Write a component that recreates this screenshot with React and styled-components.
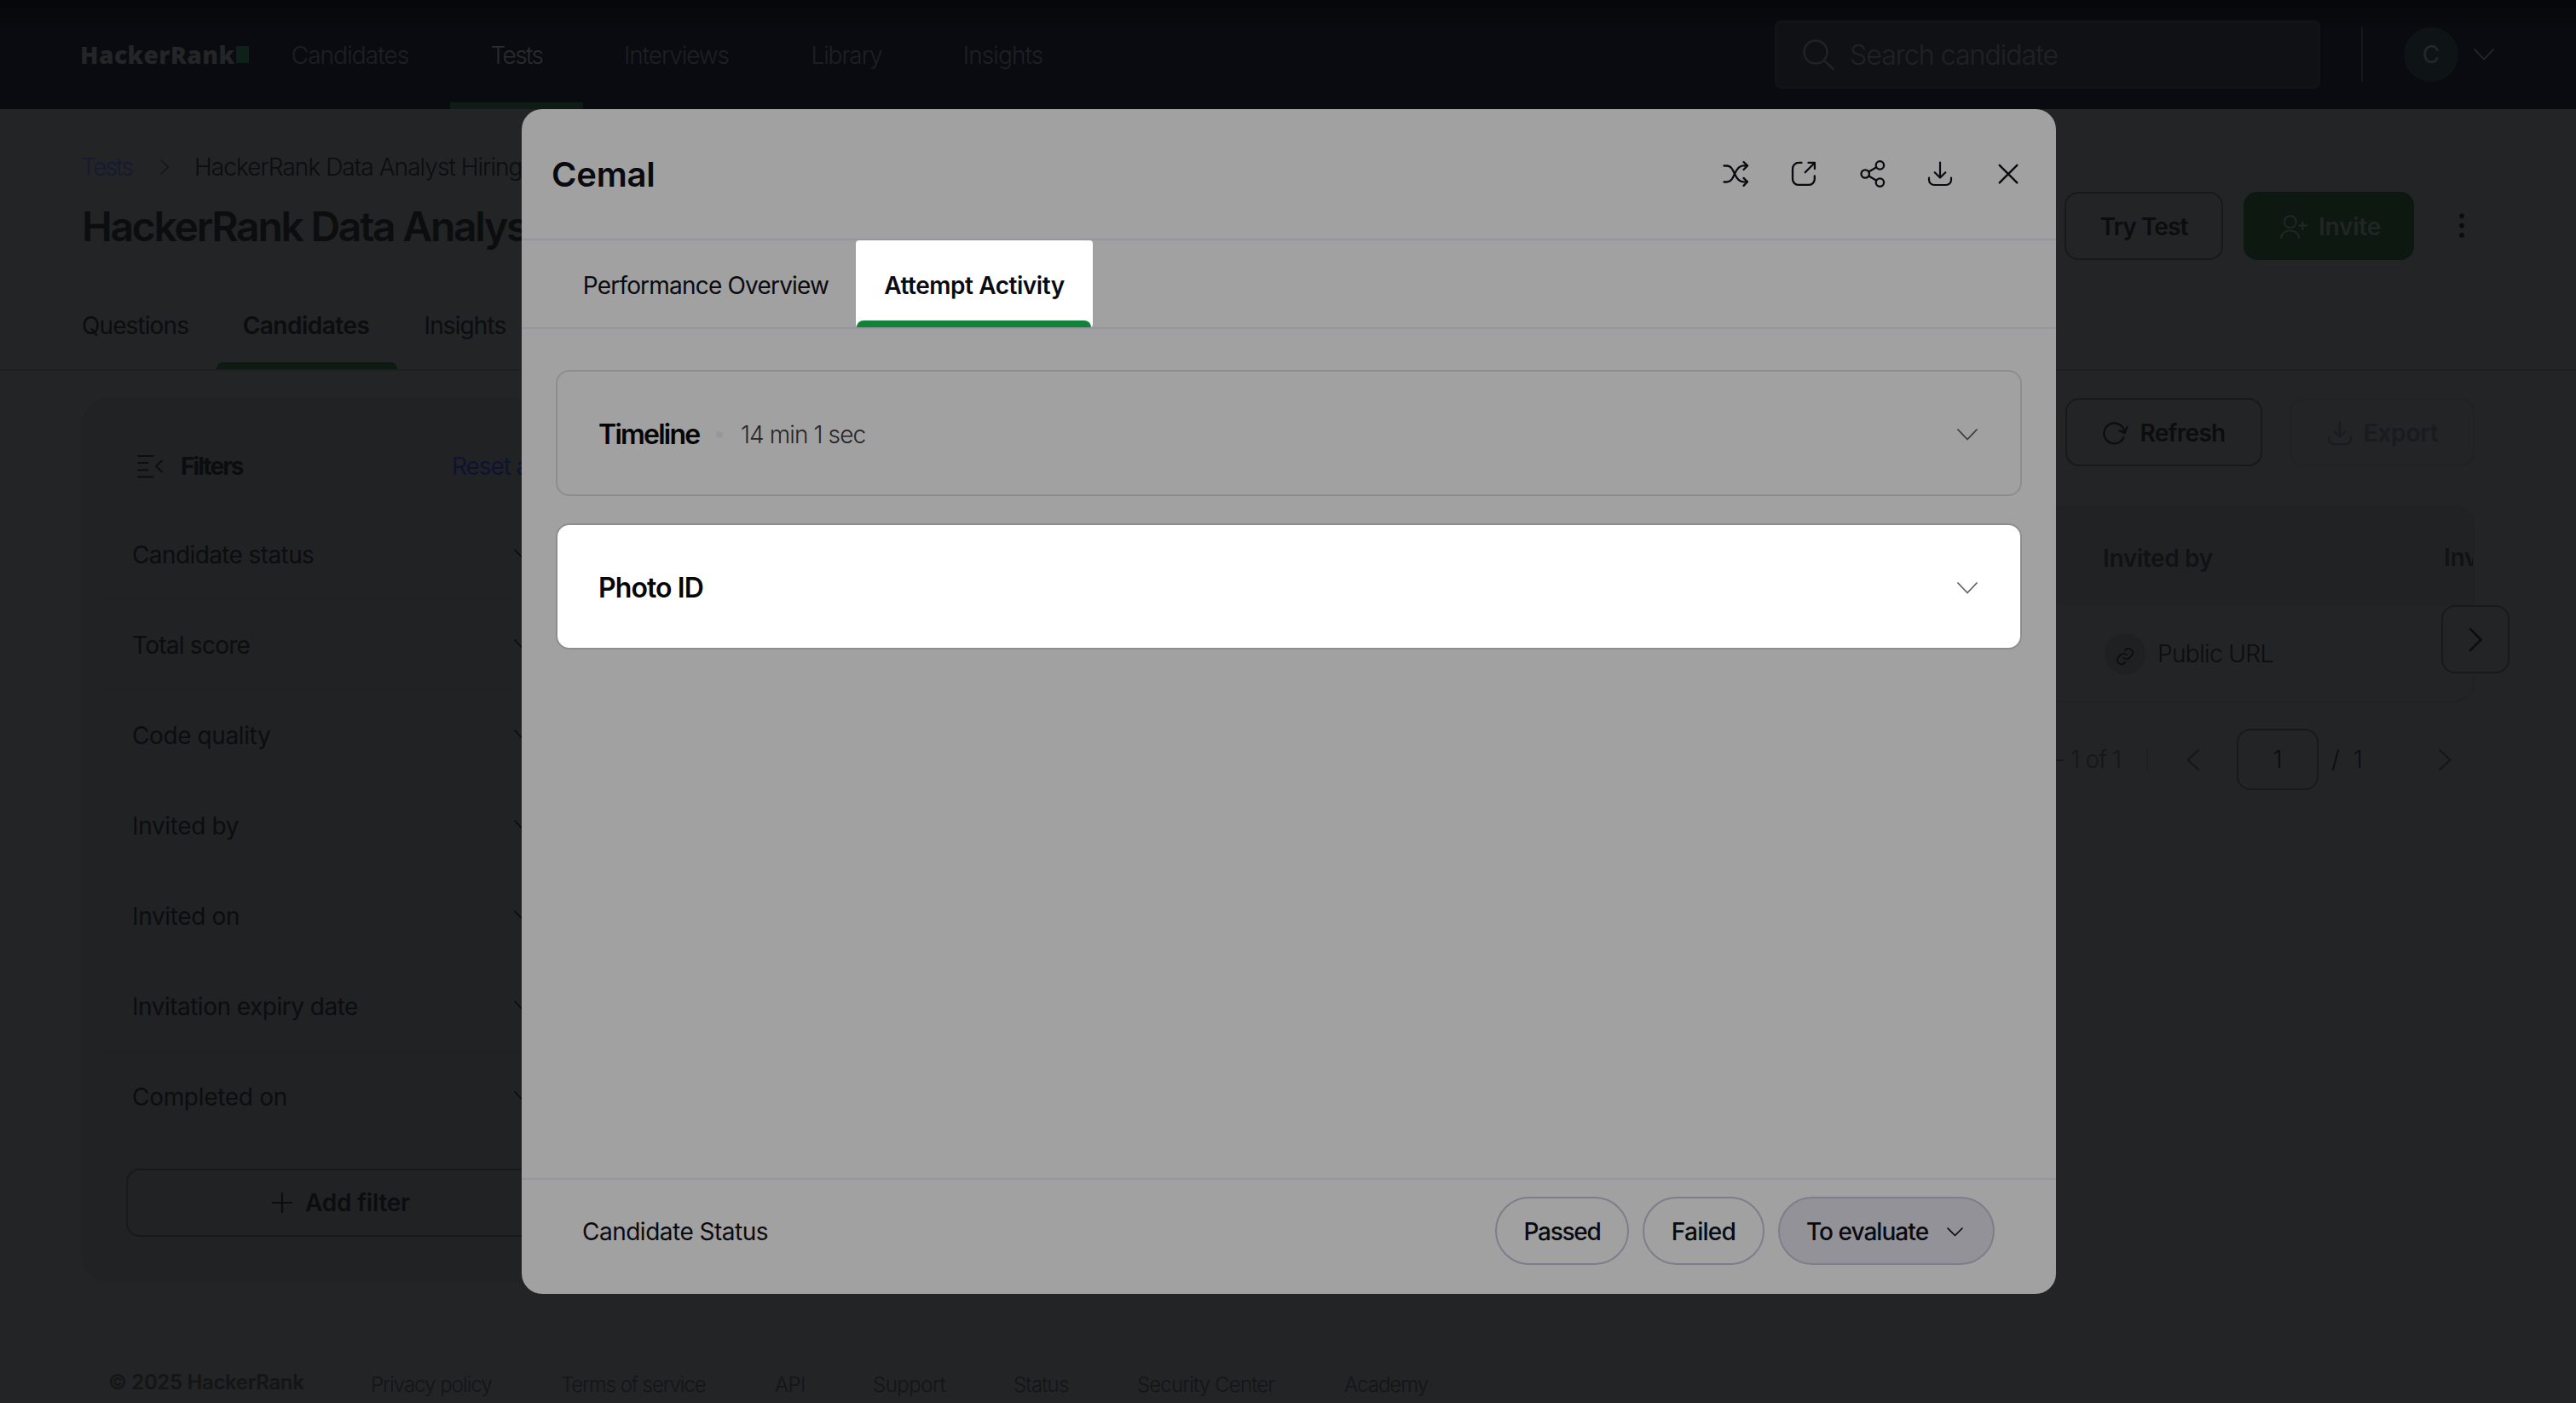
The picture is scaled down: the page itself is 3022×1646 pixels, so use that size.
import React from 'react';
import styled, { createGlobalStyle } from 'styled-components';

const navItems = [
    { label: 'Candidates', width: 235, spacing: -0.9 },
    { label: 'Tests', width: 156, spacing: -1.6, active: true },
    { label: 'Interviews', width: 219, spacing: -1.1 },
    { label: 'Library', width: 180, spacing: -1.1 },
    { label: 'Insights', width: 187, spacing: -0.9 }
];

const pageTabs = [
    { label: 'Questions', width: 189, spacing: -0.9 },
    { label: 'Candidates', width: 212, spacing: -0.5, active: true },
    { label: 'Insights', width: 161, spacing: -0.9 }
];

const filters = [
    { label: 'Candidate status', spacing: -0.6 },
    { label: 'Total score', spacing: -0.75 },
    { label: 'Code quality', spacing: -0.4 },
    { label: 'Invited by', spacing: -0.35 },
    { label: 'Invited on', spacing: -0.35 },
    { label: 'Invitation expiry date', spacing: -0.5 },
    { label: 'Completed on', spacing: -0.3 }
];

const footerLinks = [
    { label: 'Privacy policy', width: 223, spacing: -0.95 },
    { label: 'Terms of service', width: 251, spacing: -1.1 },
    { label: 'API', width: 115, spacing: -0.6 },
    { label: 'Support', width: 165, spacing: -0.5 },
    { label: 'Status', width: 145, spacing: -0.8 },
    { label: 'Security Center', width: 243, spacing: -0.85 },
    { label: 'Academy', width: 120, spacing: -1 }
];

const Chevron = ({ direction = 'down', width = 24, height = 14, weight = 1.8 }) => {
    const points = {
        down: `1,1 ${width / 2},${height - 1.5} ${width - 1},1`,
        right: `1,1 ${width - 1.5},${height / 2} 1,${height - 1}`,
        left: `${width - 1},1 1.5,${height / 2} ${width - 1},${height - 1}`
    };
    return (
        <Icon width={width} height={height} viewBox={`0 0 ${width} ${height}`} $weight={weight}>
            <polyline points={points[direction]} />
        </Icon>
    )
}

const DownloadIcon = () => (
    <Icon width="32" height="32" viewBox="0 0 32 32">
        <path d="M16 2.5V20.5M9.7 14.3 16 20.5 22.3 14.3" />
        <path d="M3 20.5V23A6 6 0 0 0 9 29H23A6 6 0 0 0 29 23V20.5" />
    </Icon>
)

const TopNav = () => {
    return (
        <TopBar>
            <Brand>HackerRank<BrandBlock /></Brand>
            <Nav>
                {navItems.map((item) => (
                    <NavItem key={item.label} $width={item.width} $spacing={item.spacing} $active={item.active}>{item.label}</NavItem>
                ))}
            </Nav>
            <SearchBox>
                <Icon width="38" height="38" viewBox="0 0 38 38" $weight={2.6}>
                    <circle cx="15" cy="16" r="13.5" />
                    <path d="M25 26 35.5 36" />
                </Icon>
                <SearchText>Search candidate</SearchText>
            </SearchBox>
            <NavDivider />
            <Avatar>C</Avatar>
            <Chevron />
        </TopBar>
    )
}

const PageHeader = () => {
    return (
        <SubHeader>
            <Crumbs>
                <CrumbLink>Tests</CrumbLink>
                <CrumbArrow><Chevron direction="right" width={11} height={18} weight={1.6} /></CrumbArrow>
                <CrumbText>HackerRank Data Analyst Hiring</CrumbText>
            </Crumbs>
            <TitleRow>
                <Title>HackerRank Data Analyst</Title>
                <Button $width={186} $spacing={-0.9}>Try Test</Button>
                <InviteButton>
                    <Icon width="37" height="32" viewBox="0 0 37 32">
                        <circle cx="15.7" cy="10.3" r="7" />
                        <path d="M5.2 29.5V28.5C6 23.5 10 20.5 15.5 20.5S25.3 23.5 26.2 28.5V29.5" />
                        <path d="M30.3 10.5V19M26 14.7H34.6" />
                    </Icon>
                    Invite
                </InviteButton>
                <Icon width="8" height="32" viewBox="0 0 8 32">
                    <g fill="currentColor" stroke="none">
                        <circle cx="4" cy="4.5" r="3" />
                        <circle cx="4" cy="15.7" r="3" />
                        <circle cx="4" cy="27" r="3" />
                    </g>
                </Icon>
            </TitleRow>
            <PageTabs>
                {pageTabs.map((tab) => (
                    <PageTab key={tab.label} $width={tab.width} $spacing={tab.spacing} $active={tab.active}>{tab.label}</PageTab>
                ))}
            </PageTabs>
        </SubHeader>
    )
}

const Sidebar = () => {
    return (
        <FilterPanel>
            <FilterHead>
                <Icon width="30" height="28" viewBox="0 0 30 28" $weight={1.8}>
                    <path d="M1 2H18.5M1 10H12.5M1 18.5H12.5M1 26.5H18.5M29 7.5 22 14 29 20.5" />
                </Icon>
                <FilterTitle>Filters</FilterTitle>
                <ResetLink>Reset all</ResetLink>
            </FilterHead>
            {filters.map((filter) => (
                <FilterRow key={filter.label} $spacing={filter.spacing}>
                    {filter.label}
                    <Chevron />
                </FilterRow>
            ))}
            <AddFilter>
                <Icon width="24" height="24" viewBox="0 0 24 24" $weight={2.2}>
                    <path d="M12 1V23M1 12H23" />
                </Icon>
                Add filter
            </AddFilter>
        </FilterPanel>
    )
}

const Results = () => {
    return (
        <ResultsColumn>
            <Toolbar>
                <Button $width={231} $spacing={-0.7}>
                    <Icon width="32" height="32" viewBox="0 0 32 32" $weight={2.2}>
                        <path d="M25.3 21.3A12 12 0 1 1 26.3 15.5M20.5 13.3 26.6 16 29.3 9" />
                    </Icon>
                    Refresh
                </Button>
                <Button $width={217} $spacing={-0.2} $disabled>
                    <DownloadIcon />
                    Export
                </Button>
            </Toolbar>
            <Table>
                <TableHead>
                    <HeadCell>Invited by</HeadCell>
                    <HeadCell $raised>Invited on</HeadCell>
                </TableHead>
                <TableRow>
                    <LinkBadge>
                        <Icon width="24" height="24" viewBox="0 0 24 24" $weight={1.7}>
                            <path d="M10 13.5a5 5 0 0 0 7 .3l3-3a5 5 0 0 0-7-7l-1.3 1.3" />
                            <path d="M14 10.500a5 5 0 0 0-7-.3l-3 3a5 5 0 0 0 7 7l1.300-1.300" />
                        </Icon>
                    </LinkBadge>
                    Public URL
                </TableRow>
            </Table>
            <ScrollButton>
                <Chevron direction="right" width={15} height={27} weight={2.6} />
            </ScrollButton>
            <Pagination>
                <PageRange>1 - 1 of 1</PageRange>
                <PageDivider />
                <PageArrow><Chevron direction="left" width={15} height={25} weight={2.2} /></PageArrow>
                <PageInput>1</PageInput>
                <PageTotal><span>/</span><span>1</span></PageTotal>
                <PageArrow $last><Chevron direction="right" width={15} height={25} weight={2.2} /></PageArrow>
            </Pagination>
        </ResultsColumn>
    )
}

const CandidateModal = () => {
    return (
        <Modal>
            <ModalHeader>
                <ModalTitle>Cemal</ModalTitle>
                <Icon width="32" height="32" viewBox="0 0 32 32" $weight={2.3}>
                    <path d="M2.5 6.5H5.5C11 6.5 13 11.5 15 16S20 25.3 25 25.3H30" />
                    <path d="M2.5 25.5H5.5C11 25.5 13 20.5 15 16S20 6.4 25 6.4H30" />
                    <path d="M25.5 2 30 6.4 25.5 11M25.5 20.9 30 25.3 25.5 29.9" />
                </Icon>
                <Icon width="32" height="32" viewBox="0 0 32 32" $weight={2.3}>
                    <path d="M13.5 2.9H10A7 7 0 0 0 3 9.9V22.3A6.5 6.5 0 0 0 9.5 28.8H22.3A6.5 6.5 0 0 0 28.8 22.3V18.5" />
                    <path d="M17.7 14.3 28.8 3M21.5 2.9H28.9V10" />
                </Icon>
                <Icon width="32" height="32" viewBox="0 0 32 32" $weight={2.3}>
                    <circle cx="25.4" cy="5.9" r="4.7" />
                    <circle cx="8.2" cy="16" r="4.7" />
                    <circle cx="25.4" cy="26.1" r="4.7" />
                    <path d="M12.3 13.6 21.3 8.3M12.3 18.4 21.3 23.7" />
                </Icon>
                <DownloadIcon />
                <Icon width="32" height="32" viewBox="0 0 32 32" $weight={2.4}>
                    <path d="M5.7 5.8 26.3 26.4M26.3 5.8 5.7 26.4" />
                </Icon>
            </ModalHeader>
            <ModalTabs>
                <ModalTab>Performance Overview</ModalTab>
                <ModalTab $active>Attempt Activity</ModalTab>
            </ModalTabs>
            <ModalBody>
                <Card>
                    <CardTitle $spacing={-1.75}>Timeline</CardTitle>
                    <Dot />
                    <Duration>14 min 1 sec</Duration>
                    <Chevron />
                </Card>
                <Card $highlight>
                    <CardTitle $spacing={-0.9}>Photo ID</CardTitle>
                    <Chevron />
                </Card>
            </ModalBody>
            <ModalFooter>
                <StatusLabel>Candidate Status</StatusLabel>
                <Pill $width={157} $spacing={-1.3}>Passed</Pill>
                <Pill $width={143} $spacing={-0.7}>Failed</Pill>
                <Pill $width={254} $spacing={-0.95} $selected>
                    To evaluate
                    <Chevron width={19} height={11} weight={1.7} />
                </Pill>
            </ModalFooter>
        </Modal>
    )
}

const App = () => {
    return (
        <Page>
            <GlobalStyle />
            <TopNav />
            <PageHeader />
            <Content>
                <Sidebar />
                <Results />
            </Content>
            <Footer>
                <Copyright>© 2025 HackerRank</Copyright>
                {footerLinks.map((link) => (
                    <FooterLink key={link.label} $width={link.width} $spacing={link.spacing}>{link.label}</FooterLink>
                ))}
            </Footer>
            <CandidateModal />
        </Page>
    )
}

export default App;

const GlobalStyle = createGlobalStyle`
    * {
        box-sizing: border-box;
    }
    body {
        margin: 0;
        background-color: #222425;
        font-family: Inter, "Liberation Sans", sans-serif;
    }
`

const Page = styled.div`
    position: relative;
    width: 3022px;
    height: 1646px;
    overflow: hidden;
    background-color: #222425;
    color: #0c0d0f;
    font-size: 28px;
    line-height: 40px;
    white-space: nowrap;
`

const Icon = styled.svg`
    display: block;
    flex-shrink: 0;
    overflow: visible;
    fill: none;
    stroke: currentColor;
    stroke-width: ${({ $weight = 2.2 }) => $weight};
    stroke-linecap: round;
    stroke-linejoin: round;
`

const TopBar = styled.div`
    display: flex;
    align-items: center;
    height: 128px;
    padding-left: 94px;
    background: linear-gradient(#050708, #0a0b10 36px);
    color: #26282a;
`

const Brand = styled.div`
    display: flex;
    align-items: center;
    justify-content: space-between;
    width: 198px;
    margin-right: 1px;
    font-family: "Open Sans", "Noto Sans", sans-serif;
    font-size: 28px;
    font-weight: 800;
    letter-spacing: 0.5px;
    color: #232526;
`

const BrandBlock = styled.span`
    width: 15px;
    height: 20px;
    flex-shrink: 0;
    background-color: #0f2018;
`

const Nav = styled.div`
    display: flex;
    height: 128px;
`

const NavItem = styled.div`
    display: flex;
    align-items: center;
    justify-content: center;
    width: ${({ $width }) => $width}px;
    padding-top: 10px;
    border-bottom: 8px solid ${({ $active }) => ($active ? '#0f1c15' : 'transparent')};
    font-weight: 300;
    letter-spacing: ${({ $spacing }) => $spacing}px;
    color: ${({ $active }) => ($active ? '#2a2c2e' : '#1e2023')};
`

const SearchBox = styled.div`
    display: flex;
    align-items: center;
    gap: 17px;
    width: 640px;
    height: 80px;
    margin-left: 812px;
    padding-left: 31px;
    border: 2px solid #121417;
    border-radius: 8px;
    background-color: #101115;
    color: #202225;
`

const SearchText = styled.span`
    padding-top: 2px;
    font-size: 32px;
    font-weight: 300;
    letter-spacing: -0.95px;
`

const NavDivider = styled.div`
    width: 2px;
    height: 64px;
    margin: 0 48px;
    background-color: #14161a;
`

const Avatar = styled.div`
    display: flex;
    align-items: center;
    justify-content: center;
    width: 64px;
    height: 64px;
    margin-right: 18px;
    border-radius: 50%;
    background-color: #0e1315;
`

const SubHeader = styled.div`
    height: 307px;
    padding-top: 48px;
    border-bottom: 2px solid #1d1f21;
`

const Crumbs = styled.div`
    display: flex;
    align-items: center;
    height: 40px;
    padding-left: 95px;
    font-weight: 300;
`

const CrumbLink = styled.span`
    width: 93px;
    letter-spacing: -1.7px;
    color: #151a33;
`

const CrumbArrow = styled.span`
    width: 40px;
    color: #141618;
`

const CrumbText = styled.span`
    letter-spacing: -0.95px;
`

const TitleRow = styled.div`
    display: flex;
    align-items: center;
    height: 80px;
    margin-top: 9px;
    padding: 0 130px 0 96px;
`

const Title = styled.h1`
    flex: 1;
    margin: 0;
    padding-top: 2px;
    font-size: 48px;
    font-weight: 600;
    letter-spacing: -2.25px;
`

const Button = styled.div`
    display: flex;
    align-items: center;
    justify-content: center;
    gap: 12px;
    width: ${({ $width }) => $width}px;
    height: 80px;
    padding-top: 1px;
    border: 2px solid ${({ $disabled }) => ($disabled ? '#202224' : '#17191b')};
    border-radius: 16px;
    font-weight: 600;
    letter-spacing: ${({ $spacing }) => $spacing}px;
    color: ${({ $disabled }) => ($disabled ? '#191b1e' : '#0c0d0f')};
`

const InviteButton = styled(Button)`
    width: 200px;
    margin: 0 52px 0 24px;
    border: none;
    background-color: #0d1811;
    letter-spacing: -0.2px;
    color: #222526;
`

const PageTabs = styled.div`
    display: flex;
    height: 104px;
    margin-top: 24px;
    padding-left: 65px;
`

const PageTab = styled.div`
    display: flex;
    align-items: center;
    justify-content: center;
    position: relative;
    width: ${({ $width }) => $width}px;
    padding: 1px 2px 0 0;
    font-weight: ${({ $active }) => ($active ? 600 : 400)};
    letter-spacing: ${({ $spacing }) => $spacing}px;

    &::after {
        content: "";
        position: absolute;
        left: 0;
        right: 0;
        bottom: 0;
        height: 8px;
        border-radius: 8px 8px 0 0;
        background-color: ${({ $active }) => ($active ? '#0d1a12' : 'transparent')};
    }
`

const Content = styled.div`
    display: flex;
    gap: 32px;
    height: 1141px;
    padding: 32px 119px 0 96px;
`

const FilterPanel = styled.div`
    flex-shrink: 0;
    width: 608px;
    height: 1037px;
    padding: 29px 21px 0;
    border-radius: 32px;
    background-color: #212224;
`

const FilterHead = styled.div`
    display: flex;
    align-items: center;
    height: 102px;
    padding-left: 44px;
`

const FilterTitle = styled.div`
    width: 318px;
    margin-left: 21px;
    font-weight: 700;
    letter-spacing: -1.9px;
`

const ResetLink = styled.div`
    letter-spacing: -1.1px;
    color: #0e1330;
`

const FilterRow = styled.div`
    display: flex;
    align-items: center;
    justify-content: space-between;
    height: 106px;
    padding: 2px 56px 0 38px;
    border-bottom: 2px solid #202123;
    letter-spacing: ${({ $spacing }) => $spacing}px;

    &:nth-child(8) {
        border-bottom-color: transparent;
    }
`

const AddFilter = styled.div`
    display: flex;
    align-items: center;
    justify-content: center;
    gap: 15px;
    height: 80px;
    margin: 31px 31px 0;
    border: 2px solid #17191b;
    border-radius: 16px;
    font-weight: 600;
    letter-spacing: -0.25px;
`

const ResultsColumn = styled.div`
    position: relative;
    flex: 1;
    min-width: 0;
`

const Toolbar = styled.div`
    display: flex;
    justify-content: flex-end;
    gap: 32px;
`

const Table = styled.div`
    height: 230px;
    margin-top: 47px;
    border: 2px solid #202123;
    border-radius: 24px;
    overflow: hidden;
`

const TableHead = styled.div`
    display: flex;
    align-items: center;
    height: 114px;
    padding: 3px 0 0 1729px;
    background-color: #212224;
    color: #101214;
`

const HeadCell = styled.div`
    width: 400px;
    flex-shrink: 0;
    padding-bottom: ${({ $raised }) => ($raised ? 2 : 0)}px;
    font-weight: 600;
    letter-spacing: -0.35px;
`

const TableRow = styled.div`
    display: flex;
    align-items: center;
    gap: 14px;
    height: 114px;
    padding-left: 1731px;
    font-weight: 300;
    letter-spacing: -0.6px;
`

const LinkBadge = styled.div`
    display: flex;
    align-items: center;
    justify-content: center;
    width: 48px;
    height: 48px;
    padding-top: 5px;
    border-radius: 50%;
    background-color: #1f2022;
`

const ScrollButton = styled.div`
    display: flex;
    align-items: center;
    justify-content: center;
    position: absolute;
    top: 243px;
    right: -41px;
    width: 80px;
    height: 80px;
    border: 2px solid #17191b;
    border-radius: 16px;
    background-color: #222425;
`

const Pagination = styled.div`
    display: flex;
    align-items: center;
    justify-content: flex-end;
    height: 72px;
    margin-top: 31px;
    padding-right: 21px;
    font-weight: 300;
`

const PageRange = styled.div`
    letter-spacing: -0.9px;
    color: #15171a;
`

const PageDivider = styled.div`
    width: 2px;
    height: 28px;
    margin-left: 30px;
    background-color: #1d1f21;
`

const PageArrow = styled.div`
    display: flex;
    justify-content: center;
    width: 28px;
    margin-left: ${({ $last }) => ($last ? 0 : 38)}px;
    color: #15171a;
`

const PageInput = styled.div`
    display: flex;
    align-items: center;
    justify-content: center;
    width: 96px;
    height: 72px;
    margin-left: 38px;
    border: 2px solid #17191b;
    border-radius: 16px;
`

const PageTotal = styled.div`
    display: flex;
    gap: 16px;
    width: 134px;
    padding-left: 15px;
`

const Footer = styled.div`
    display: flex;
    padding: 26px 0 0 127px;
    font-size: 24px;
    color: #131517;
`

const Copyright = styled.div`
    width: 308px;
    font-weight: 600;
    letter-spacing: -0.35px;
`

const FooterLink = styled.div`
    width: ${({ $width }) => $width}px;
    padding-top: 3px;
    font-weight: 300;
    letter-spacing: ${({ $spacing }) => $spacing}px;
`

const Modal = styled.div`
    display: flex;
    flex-direction: column;
    position: absolute;
    top: 128px;
    left: 612px;
    width: 1800px;
    height: 1390px;
    border-radius: 24px;
    background-color: #a1a1a1;
    color: #0a0b10;
`

const ModalHeader = styled.div`
    display: flex;
    align-items: center;
    gap: 48px;
    height: 154px;
    padding: 0 40px 0 35px;
    border-bottom: 2px solid #95959b;
`

const ModalTitle = styled.h2`
    flex: 1;
    margin: 0;
    padding-top: 2px;
    font-size: 40px;
    font-weight: 600;
    letter-spacing: -0.2px;
`

const ModalTabs = styled.div`
    display: flex;
    height: 104px;
    padding-left: 40px;
    border-bottom: 2px solid #95959b;
`

const ModalTab = styled.div`
    display: flex;
    align-items: center;
    justify-content: center;
    position: relative;
    width: ${({ $active }) => ($active ? 278 : 352)}px;
    padding-top: 3px;
    border-radius: 4px;
    background-color: ${({ $active }) => ($active ? '#ffffff' : 'transparent')};
    font-weight: ${({ $active }) => ($active ? 600 : 400)};
    letter-spacing: ${({ $active }) => ($active ? -0.45 : -0.8)}px;

    &::after {
        content: "";
        position: absolute;
        left: 1px;
        right: 2px;
        bottom: 0;
        height: 8px;
        border-radius: 8px 8px 0 0;
        background-color: ${({ $active }) => ($active ? '#138239' : 'transparent')};
    }
`

const ModalBody = styled.div`
    display: flex;
    flex-direction: column;
    gap: 32px;
    flex: 1;
    padding: 48px 40px 0;
`

const Card = styled.div`
    display: flex;
    align-items: center;
    height: 148px;
    padding: 3px 50px 0 48px;
    border: 2px solid #8d8d8d;
    border-radius: 16px;
    background-color: ${({ $highlight }) => ($highlight ? '#ffffff' : 'transparent')};

    svg {
        margin-left: auto;
        color: ${({ $highlight }) => ($highlight ? '#62626e' : '#3e3e45')};
    }
`

const CardTitle = styled.div`
    width: 138px;
    font-size: 32px;
    font-weight: 600;
    letter-spacing: ${({ $spacing }) => $spacing}px;
    color: #060606;
`

const Dot = styled.div`
    width: 8px;
    height: 8px;
    margin-right: 21px;
    border-radius: 50%;
    background-color: #97979f;
`

const Duration = styled.div`
    font-weight: 300;
    letter-spacing: -0.9px;
    color: #26262a;
`

const ModalFooter = styled.div`
    display: flex;
    gap: 16px;
    height: 136px;
    padding: 20px 72px 0 71px;
    border-top: 2px solid #95959b;
`

const StatusLabel = styled.div`
    flex: 1;
    padding-top: 1px;
    line-height: 80px;
    letter-spacing: -0.5px;
`

const Pill = styled.div`
    display: flex;
    align-items: center;
    justify-content: center;
    gap: 22px;
    width: ${({ $width }) => $width}px;
    height: 80px;
    padding: 2px ${({ $selected }) => ($selected ? 4 : 0)}px 0 0;
    border: 2px solid #7e7e8b;
    border-radius: 40px;
    background-color: ${({ $selected }) => ($selected ? '#949299' : 'transparent')};
    font-weight: 450;
    letter-spacing: ${({ $spacing }) => $spacing}px;
`
